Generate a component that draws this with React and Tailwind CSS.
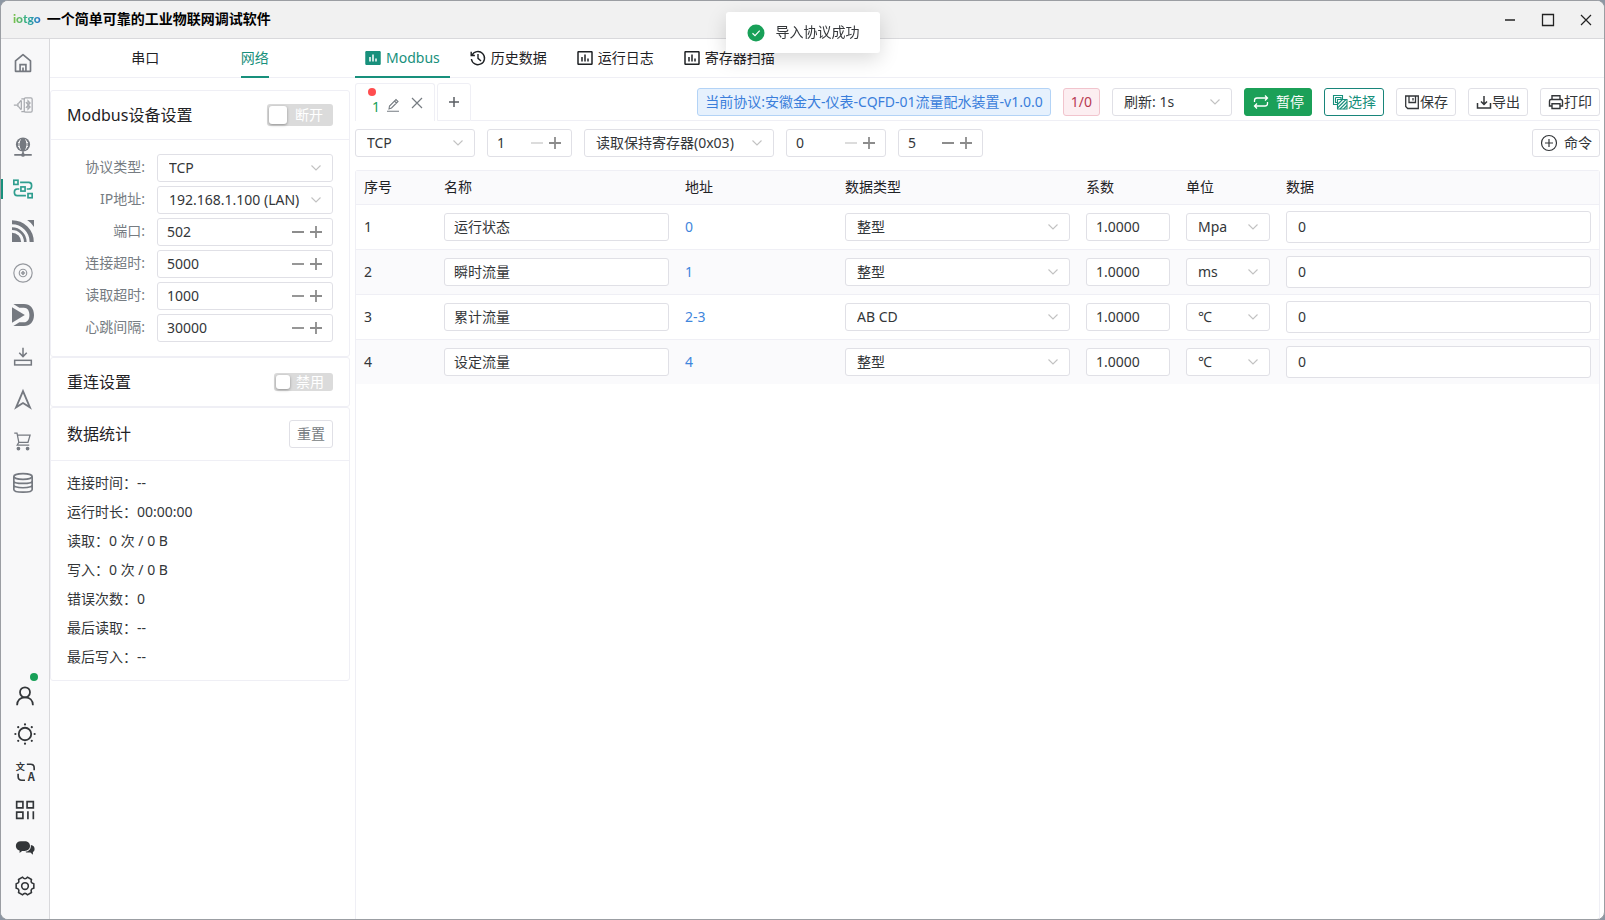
import React, { useState } from 'react';
import clsx from 'clsx';

const Svg = ({ size = 'size-5', className, children, box = 24, sw = 1.8 }) => (
    <svg
        viewBox={`0 0 ${box} ${box}`}
        className={clsx(size, 'shrink-0 overflow-visible', className)}
        fill="none"
        stroke="currentColor"
        strokeWidth={sw}
        aria-hidden="true"
    >
        {children}
    </svg>
);

const HomeIcon = () => (
    <Svg sw={2}>
        <path d="M3 22V9.500L12 2l9 7.500V22z" strokeLinejoin="round" />
        <path d="M8.500 22v-8h7v8M12 22v-4.500" />
    </Svg>
);

const PlugIcon = () => (
    <Svg className="opacity-60" sw={1.5}>
        <path d="M1 12h5M6 9.500v5M6 10c2.500 0 2-3.500 4-3.500M6 14c2.500 0 2 3.500 4 3.500M10 20h4M10 4.500h4M10 6.500v11" />
        <rect x="13.500" y="3.500" width="9.500" height="17" rx="1.500" />
        <path d="M15.500 8.500l5 6-2.500 2.500V7l2.500 2.500-5 6" />
    </Svg>
);

const GlobeIcon = () => (
    <Svg sw={1.6}>
        <circle cx="12" cy="9" r="8.500" fill="currentColor" stroke="none" />
        <path d="M12 17v4M1.500 21.500h21" strokeWidth="2" />
        <circle cx="12" cy="21.500" r="2.200" fill="currentColor" stroke="none" />
        <path d="M9 3c-2.500 4-2.500 8 0 12M15 3c2.500 4 2.500 8 0 12M6 6.500h2M6 11.500h2M16 6.500h2M16 11.500h2" stroke="#f8f8f9" strokeWidth="1.200" />
    </Svg>
);

const FlowIcon = () => (
    <Svg sw={2}>
        <rect x="1" y="1.500" width="5" height="5" />
        <rect x="9.500" y="9.500" width="5" height="5" />
        <rect x="18" y="17.500" width="5" height="5" />
        <path d="M8.500 4H19c4.500 0 4.500 8 0 8h-2.500M7.500 12H5c-4.500 0-4.500 8 0 8h10.500" />
    </Svg>
);

const SignalIcon = () => (
    <Svg size="size-[22px]">
        <path d="M0 14a10 10 0 0 1 10 10H0z" fill="currentColor" stroke="none" />
        <path d="M0 9.500A14.500 14.500 0 0 1 14.500 24" strokeWidth="3" />
        <path d="M0 2.500A21.500 21.500 0 0 1 21.500 24" strokeWidth="4.500" />
        <path d="M16.500 0H24v7.500A24 24 0 0 0 16.500 0z" fill="currentColor" stroke="none" />
    </Svg>
);

const TargetIcon = () => (
    <Svg className="opacity-75" sw={1.4}>
        <circle cx="12" cy="12" r="11" />
        <circle cx="12" cy="12" r="4.500" />
        <path d="M12 9.500v5M9.500 12h5" strokeWidth="2" />
    </Svg>
);

const PlayDIcon = () => (
    <Svg size="size-[22px]">
        <path
            d="M1.500 0H13c7 0 11 5 11 12s-4 12-11 12H1.500L8 20h5c4 0 6-3.500 6-8s-2-8-6-8H8z"
            fill="currentColor"
            stroke="none"
        />
        <path d="M0 3.500L14 12 0 20.500z" fill="currentColor" stroke="none" />
    </Svg>
);

const TrayIcon = () => (
    <Svg>
        <path d="M12 1v10M7.500 7l4.500 4.500L16.500 7" />
        <rect x="2" y="16" width="20" height="5.500" />
    </Svg>
);

const NavigateIcon = () => (
    <Svg sw={2.2}>
        <path d="M12 2.500l8.300 19.500L12 16.800 3.700 22z" />
    </Svg>
);

const CartIcon = () => (
    <Svg sw={1.5}>
        <path d="M1.500 2.500h3.300L7 13.500h11l2.500-8.500H5.500M7 13.500l-2 3.500h14.500" />
        <circle cx="6.500" cy="21" r="1.500" fill="currentColor" />
        <circle cx="17.500" cy="21" r="1.500" fill="currentColor" />
    </Svg>
);

const DatabaseIcon = () => (
    <Svg sw={2}>
        <ellipse cx="12" cy="4.200" rx="11" ry="3.400" />
        <path d="M1 4.200v15.500C1 24 23 24 23 19.700V4.200M1 9.500c0 4 22 4 22 0M1 14.500c0 4.200 22 4.200 22 0" />
    </Svg>
);

const UserIcon = () => (
    <Svg sw={2.1}>
        <circle cx="12" cy="7.500" r="6" />
        <path d="M2.500 23c0-6 4-9.500 9.500-9.500s9.500 3.500 9.500 9.500" />
    </Svg>
);

const SunIcon = () => (
    <Svg sw={2} size="size-[22px]">
        <circle cx="12" cy="12" r="6.800" />
        <path
            d="M12 1.500v.01M12 22.500v.01M1.500 12h.01M22.500 12h.01M4.600 4.600v.01M19.400 4.600v.01M4.600 19.400v.01M19.400 19.400v.01"
            strokeLinecap="round"
            strokeWidth="2.400"
        />
    </Svg>
);

const TranslateIcon = () => (
    <Svg sw={1.8} size="size-[22px]">
        <g fill="currentColor" stroke="none" fontFamily="'Noto Sans CJK SC', sans-serif" fontWeight="700">
            <text x="2" y="10" fontSize="10">文</text>
            <text x="15" y="22" fontSize="12">A</text>
        </g>
        <path d="M14 3.500h4c2.500 0 4 1.500 4 4V10M4.500 14v3c0 2.500 1.500 4 4 4H12" />
    </Svg>
);

const GridIcon = () => (
    <Svg sw={2}>
        <path d="M2 2h7.500v7.500H2zM14.500 2H22v7.500h-7.500zM2 14.500h7.500V22H2zM15.500 13.500V23M22 13.500V23" />
    </Svg>
);

const ChatIcon = () => (
    <Svg>
        <path
            d="M7 4h4.500c4 0 6.500 2 6.500 5.700 0 3.600-2.500 5.800-6.500 5.800H8.500L5.500 18v-3C3 14.500 1 12.500 1 9.700 1 6 3.500 4 7 4z"
            fill="currentColor"
            stroke="none"
        />
        <path d="M19 8.500c3 .5 4.500 2 4.500 4.700 0 2-.8 3-2 3.600V20L18.500 17.500H15c-1.200 0-2-.3-2.500-1 4-.2 7-3 6.500-8z" fill="currentColor" stroke="none" />
    </Svg>
);

const GearIcon = () => (
    <Svg sw={1.9}>
        <path
            d="M22.600 9.200v5.600Q18.100 15.500 19.800 19.800L14.900 22.600Q12 19 9.100 22.600L4.200 19.800Q5.900 15.500 1.400 14.800V9.200Q5.900 8.500 4.200 4.200L9.100 1.400Q12 5 14.900 1.400L19.800 4.200Q18.100 8.500 22.600 9.200z"
            strokeLinejoin="round"
        />
        <circle cx="12" cy="12" r="4" />
    </Svg>
);

const ChartIcon = ({ filled }) => (
    <Svg size="size-4" box={16} sw={1.5}>
        <rect x="1" y="1.700" width="14" height="12.600" rx=".5" fill={filled ? 'currentColor' : 'none'} />
        <path d="M5 7v4.500M8 4.500v7M11 8.500v3" stroke={filled ? '#fff' : 'currentColor'} />
    </Svg>
);

const HistoryIcon = () => (
    <Svg size="size-4" box={16} sw={1.4}>
        <path d="M2 5.200A6.600 6.600 0 1 1 1.400 9M1.200 1.800v3.700h3.700M8 4v4.400l3 2.600" />
    </Svg>
);

const Chevron = ({ className }) => (
    <svg
        viewBox="0 0 10 6"
        className={clsx('pointer-events-none absolute top-1/2 h-[6px] w-[10px] -translate-y-1/2', className)}
        fill="none"
        stroke="#c2c2c2"
        strokeWidth="1.1"
        aria-hidden="true"
    >
        <path d="M.5.5L5 5 9.500.5" />
    </svg>
);

const Select = ({ value, label, id, className }) => (
    <div className={clsx('relative h-7', className)}>
        <select
            id={id}
            aria-label={label}
            className="h-7 w-full appearance-none rounded-[3px] border border-[#e0e0e6] bg-white pr-6 pl-[11px] text-sm leading-5 text-[#333639] outline-none"
            defaultValue={value}
        >
            <option>{value}</option>
        </select>
        <Chevron className="right-3" />
    </div>
);

const NumberInput = ({ value, label, id, className, min = -1 }) => {
    const [num, setNum] = useState(value);
    return (
        <div className={clsx('flex h-7 items-center gap-[6px] rounded-[3px] border border-[#e0e0e6] bg-white pr-[10px] pl-[9px] text-[#8c8c8c]', className)}>
            <input
                id={id}
                aria-label={label}
                value={num}
                onChange={(e) => setNum(Number(e.target.value) || 0)}
                className="w-0 min-w-0 flex-1 bg-transparent text-sm leading-5 text-[#333639] outline-none"
            />
            <button
                type="button"
                aria-label="减少"
                disabled={num <= min}
                onClick={() => setNum(num - 1)}
                className="disabled:text-[#dcdcdc]"
            >
                <Svg size="size-3" box={12} sw={1.8}><path d="M0 6h12" /></Svg>
            </button>
            <button type="button" aria-label="增加" onClick={() => setNum(num + 1)}>
                <Svg size="size-3" box={12} sw={1.8}><path d="M0 6h12M6 0v12" /></Svg>
            </button>
        </div>
    );
};

const Switch = ({ label, text, large }) => (
    <label
        className={clsx(
            'relative flex cursor-pointer items-center justify-end rounded-[3px] bg-[#dbdbdb] text-sm leading-5 text-white',
            large ? 'h-[22px] w-[66px] pr-[10px]' : 'h-[18px] w-[59px] pr-[9px]'
        )}
    >
        <input type="checkbox" role="switch" aria-label={label} className="peer sr-only" />
        <span
            className={clsx(
                'absolute top-1/2 left-[2px] -translate-y-1/2 rounded-[3px] bg-white shadow-[0_1px_3px_rgba(0,0,0,0.35)]',
                large ? 'size-[18px]' : 'size-[14px]'
            )}
        />
        {text}
    </label>
);

const topNav = [
    ['首页', HomeIcon],
    ['串口设备', PlugIcon],
    ['网络', GlobeIcon],
    ['Modbus', FlowIcon],
    ['MQTT', SignalIcon],
    ['OPC', TargetIcon],
    ['DTU', PlayDIcon],
    ['下载', TrayIcon],
    ['导航', NavigateIcon],
    ['商城', CartIcon],
    ['数据库', DatabaseIcon],
];

const bottomNav = [
    ['用户', UserIcon],
    ['主题', SunIcon],
    ['语言', TranslateIcon],
    ['二维码', GridIcon],
    ['消息', ChatIcon],
    ['设置', GearIcon],
];

const numberFields = [
    ['port', '端口:', 502],
    ['connectTimeout', '连接超时:', 5000],
    ['readTimeout', '读取超时:', 1000],
    ['heartbeat', '心跳间隔:', 30000],
];

const stats = [
    ['连接时间', '--'],
    ['运行时长', '00:00:00'],
    ['读取', '0 次 / 0 B'],
    ['写入', '0 次 / 0 B'],
    ['错误次数', '0'],
    ['最后读取', '--'],
    ['最后写入', '--'],
];

const mainTabs = [
    ['Modbus', <ChartIcon filled />],
    ['历史数据', <HistoryIcon />],
    ['运行日志', <ChartIcon />],
    ['寄存器扫描', <ChartIcon />],
];

const registers = [
    { id: 1, name: '运行状态', address: '0', type: '整型', unit: 'Mpa' },
    { id: 2, name: '瞬时流量', address: '1', type: '整型', unit: 'ms' },
    { id: 3, name: '累计流量', address: '2-3', type: 'AB CD', unit: '℃' },
    { id: 4, name: '设定流量', address: '4', type: '整型', unit: '℃' },
];

const TitleBar = () => (
    <header className="flex h-[38px] items-center justify-between border-b border-[#d9d9dc] bg-[#f1f1f1] pr-[11px] pl-3">
        <div className="flex items-center gap-[6px] pb-[2px]">
            <span className="bg-linear-to-r from-[#7cc242] via-[#2fae8c] to-[#2f6fd0] bg-clip-text font-['Lato','Noto_Sans',sans-serif] text-xs leading-4 font-black text-transparent">
                iotgo
            </span>
            <h1 className="text-sm leading-5 font-bold text-black">一个简单可靠的工业物联网调试软件</h1>
        </div>
        <div className="flex items-center gap-6 text-[#222]">
            <button type="button" aria-label="最小化">
                <Svg size="size-[14px]" box={14} sw={1.5}><path d="M2 7h10" /></Svg>
            </button>
            <button type="button" aria-label="最大化">
                <Svg size="size-[14px]" box={14} sw={1.3}><path d="M1.500 1.500h11v11h-11z" /></Svg>
            </button>
            <button type="button" aria-label="关闭">
                <Svg size="size-[14px]" box={14} sw={1.2}><path d="M2 2l10 10M12 2L2 12" /></Svg>
            </button>
        </div>
    </header>
);

const Sidebar = () => (
    <nav className="flex w-[49px] shrink-0 flex-col justify-between border-r border-[#d9d9dc] bg-[#f8f8f9] pt-[3px] pb-[14px]">
        <ul className="text-[#757980]">
            {topNav.map(([name, Icon]) => (
                <li key={name} className="relative h-[42px]">
                    <button
                        type="button"
                        aria-label={name}
                        className={clsx('flex h-full w-11 items-center justify-center', name === 'Modbus' && 'text-[#2f9e8f]')}
                    >
                        <Icon />
                    </button>
                    {name === 'Modbus' && <span className="absolute top-[11px] left-0 h-5 w-[2px] bg-[#18907c]" />}
                </li>
            ))}
        </ul>
        <ul className="text-[#333639]">
            {bottomNav.map(([name, Icon]) => (
                <li key={name} className="relative h-[38px]">
                    <button type="button" aria-label={name} className="flex h-full w-12 items-center justify-center">
                        <Icon />
                    </button>
                    {name === '用户' && <span className="absolute -top-1 right-[11px] size-2 rounded-full bg-[#18a058]" />}
                </li>
            ))}
        </ul>
    </nav>
);

const SettingsPanel = () => (
    <aside className="w-[305px] shrink-0">
        <div className="flex h-[39px] justify-evenly border-b border-[#efeff5] pr-[5px]" role="tablist">
            <button type="button" role="tab" className="h-[39px] border-b-2 border-transparent text-sm leading-5 text-[#1f2225]">串口</button>
            <button type="button" role="tab" aria-selected="true" className="h-[39px] border-b-2 border-[#18907c] text-sm leading-5 text-[#18907c]">网络</button>
        </div>
        <div className="mt-3 mr-[5px]">
            <section className="rounded-[3px] border border-[#efeff5]">
                <div className="flex h-[49px] items-center justify-between border-b border-[#efeff5] px-4">
                    <h2 className="text-base leading-6 text-[#1f2225]">Modbus设备设置</h2>
                    <Switch large label="连接" text="断开" />
                </div>
                <div className="grid grid-cols-[78px_1fr] items-center gap-x-3 gap-y-1 px-4 py-[14px] text-sm leading-5 text-[#767c82]">
                    <label htmlFor="protocol" className="pb-[2px] text-right">协议类型:</label>
                    <Select id="protocol" value="TCP" />
                    <label htmlFor="ip" className="pb-[2px] text-right">IP地址:</label>
                    <Select id="ip" value="192.168.1.100 (LAN)" />
                    {numberFields.map(([id, label, value]) => (
                        <React.Fragment key={id}>
                            <label htmlFor={id} className="pb-[2px] text-right">{label}</label>
                            <NumberInput id={id} value={value} />
                        </React.Fragment>
                    ))}
                </div>
            </section>
            <section className="flex h-[50px] items-center justify-between rounded-[3px] border border-[#efeff5] px-4">
                <h2 className="text-base leading-6 text-[#1f2225]">重连设置</h2>
                <Switch label="重连" text="禁用" />
            </section>
            <section className="rounded-[3px] border border-[#efeff5]">
                <div className="flex h-[53px] items-center justify-between border-b border-[#efeff5] px-4">
                    <h2 className="text-base leading-6 text-[#1f2225]">数据统计</h2>
                    <button type="button" className="h-7 rounded-[3px] border border-[#e0e0e6] px-[7px] text-sm leading-5 text-[#767c82]">重置</button>
                </div>
                <ul className="px-4 pt-[7px] pb-[9px] text-sm leading-[29px] text-[#333639]">
                    {stats.map(([name, value]) => (
                        <li key={name}>{name}：{value}</li>
                    ))}
                </ul>
            </section>
        </div>
    </aside>
);

const ToolButton = ({ children, className = 'border-[#e0e0e6] bg-white text-[#333639]' }) => (
    <button type="button" className={clsx('flex h-7 shrink-0 items-center rounded-[3px] border px-[7px] text-sm leading-5', className)}>
        {children}
    </button>
);

const Toolbar = () => (
    <div className="flex">
        <div className="relative flex h-[38px] w-20 items-center rounded-t-[3px] border border-b-0 border-[#efeff5] pl-4">
            <span className="absolute top-1 left-3 size-2 rounded-full bg-[#ff4d4f]" />
            <span className="pt-2 text-sm leading-5 text-[#18a058]">1</span>
            <button type="button" aria-label="编辑" className="ml-[6px] pt-1 text-[#767c82]">
                <Svg size="size-[14px]" box={14} sw={1.1}>
                    <path d="M1 13.200h12M3 11l.5-3L10 1.500l2 2L5.500 10zM8.500 3l2 2" />
                </Svg>
            </button>
            <button type="button" aria-label="关闭标签" className="ml-[11px] text-[#767c82]">
                <Svg size="size-3" box={12} sw={1.2}><path d="M1 1l10 10M11 1L1 11" /></Svg>
            </button>
        </div>
        <button
            type="button"
            aria-label="新建标签"
            className="ml-[2px] flex w-[34px] items-center justify-center rounded-t-[3px] border border-[#efeff5] text-[#5a5e63]"
        >
            <Svg size="size-3" box={12} sw={1.5}><path d="M1 6h10M6 1v10" /></Svg>
        </button>
        <div className="flex flex-1 items-center justify-end gap-3 border-b border-[#efeff5]">
            <span className="flex h-7 shrink-0 items-center rounded-[3px] border border-[#b3d3f6] bg-[#e6f1fd] px-[7px] text-sm leading-5 text-[#3a7edb]">
                当前协议:安徽金大-仪表-CQFD-01流量配水装置-v1.0.0
            </span>
            <span className="flex h-7 shrink-0 items-center rounded-[3px] border border-[#f1c4cd] bg-[#fceef1] px-[7px] text-sm leading-5 text-[#b83a52]">
                1/0
            </span>
            <Select className="w-[120px]" label="刷新间隔" value="刷新: 1s" />
            <ToolButton className="border-[#1ba058] bg-[#1ba058] text-white">
                <Svg size="size-[18px]" box={18} sw={1.3}>
                    <path d="M2.500 9V7.500c0-1.700 1-2.500 2.500-2.500h10.500M13 2.500L15.500 5 13 7.500M15.500 9v1.500c0 1.700-1 2.500-2.500 2.500H2.500M5 10.500L2.500 13 5 15.500" />
                </Svg>
                <span className="ml-[6px]">暂停</span>
            </ToolButton>
            <ToolButton className="border-[#18857a] bg-white text-[#18907c]">
                <Svg size="size-4" box={16} sw={1.1}>
                    <path d="M5 10.500H1.500V1.500h9V5M5.500 5.500h9.500v9.500H5.500zM3.500 3.500V8.500H5M3.500 3.500H9V5" />
                    <path d="M5.500 10.500l5-5M5.500 14l8.500-8.500M8 15l7-7M11.500 15l3.500-3.500" />
                </Svg>
                选择
            </ToolButton>
            <ToolButton>
                <Svg size="size-4" box={16} sw={1.3}>
                    <path d="M1.700 2h12.600v12.500H3.700l-2-2zM5 2v6.500h6.500V2M9 4v2.500" />
                </Svg>
                保存
            </ToolButton>
            <ToolButton>
                <Svg size="size-4" box={16} sw={1.5}>
                    <path d="M1.500 9v5h13V9M8 2v8.500M5 7.500l3 3 3-3" />
                </Svg>
                导出
            </ToolButton>
            <ToolButton>
                <Svg size="size-4" box={16} sw={1.4}>
                    <path d="M4 5.500V1.700h8v3.800M4 12H1.500V7c0-1 .5-1.500 1.500-1.500h10c1 0 1.500.5 1.500 1.500v5H12M4 9.700h8v4.800H4z" />
                </Svg>
                打印
            </ToolButton>
        </div>
    </div>
);

const RegisterTable = () => (
    <div className="mt-[13px] flex-1 rounded-t-[3px] border border-b-0 border-[#efeff5]">
        <table className="w-full table-fixed border-separate border-spacing-0 text-left text-sm leading-5 text-[#333639]">
            <thead>
                <tr className="h-[34px] bg-[#fafafc] text-[#1f2225] *:border-b *:border-[#efeff5] *:px-2 *:pt-0 *:pb-[2px] *:font-normal">
                    <th className="w-20">序号</th>
                    <th className="w-[241px]">名称</th>
                    <th className="w-40">地址</th>
                    <th className="w-[241px]">数据类型</th>
                    <th className="w-[100px]">系数</th>
                    <th className="w-[100px]">单位</th>
                    <th>数据</th>
                </tr>
            </thead>
            <tbody>
                {registers.map((row) => (
                    <tr
                        key={row.id}
                        className="h-[45px] *:border-b *:border-[#efeff5] *:px-2 *:py-0 even:bg-[#fafafc] last:h-11 last:*:border-b-0"
                    >
                        <td>{row.id}</td>
                        <td>
                            <input
                                aria-label="名称"
                                defaultValue={row.name}
                                className="block h-7 w-full rounded-[3px] border border-[#e0e0e6] bg-white px-[9px] pb-[2px] outline-none"
                            />
                        </td>
                        <td className="text-[#3f86dc]">{row.address}</td>
                        <td><Select label="数据类型" value={row.type} /></td>
                        <td>
                            <input
                                aria-label="系数"
                                defaultValue="1.0000"
                                className="block h-7 w-full rounded-[3px] border border-[#e0e0e6] bg-white px-[9px] pb-[2px] outline-none"
                            />
                        </td>
                        <td><Select label="单位" value={row.unit} /></td>
                        <td>
                            <input
                                aria-label="数据"
                                defaultValue="0"
                                className="block h-8 w-full rounded-[3px] border border-[#e0e0e6] bg-white px-[11px] pb-[2px] outline-none"
                            />
                        </td>
                    </tr>
                ))}
            </tbody>
        </table>
    </div>
);

const App = () => {
    return (
        <div className="flex min-h-screen flex-col bg-[#8d97a3] font-['Noto_Sans','Noto_Sans_CJK_SC',sans-serif]">
            <div className="flex flex-1 flex-col overflow-hidden rounded-lg border border-[#9b9ea3] bg-white">
                <TitleBar />
                <div className="flex flex-1">
                    <Sidebar />
                    <SettingsPanel />
                    <main className="flex min-w-0 flex-1 flex-col pr-1">
                        <div className="-mr-1 flex h-[39px] gap-[10px] border-b border-[#efeff5]" role="tablist">
                            {mainTabs.map(([name, icon]) => (
                                <button
                                    key={name}
                                    type="button"
                                    role="tab"
                                    aria-selected={name === 'Modbus'}
                                    className={clsx(
                                        'flex h-[39px] items-center gap-[5px] border-b-2 px-[10px] text-sm leading-5',
                                        name === 'Modbus' ? 'border-[#18907c] text-[#18907c]' : 'border-transparent text-[#1f2225]'
                                    )}
                                >
                                    {icon}
                                    {name}
                                </button>
                            ))}
                        </div>
                        <div className="mt-[5px]">
                            <Toolbar />
                        </div>
                        <div className="mt-2 flex items-center gap-3">
                            <Select className="w-[120px]" label="协议" value="TCP" />
                            <NumberInput className="w-[85px]" label="从站地址" value={1} min={1} />
                            <Select className="w-[190px]" label="功能码" value="读取保持寄存器(0x03)" />
                            <NumberInput className="w-[100px]" label="起始地址" value={0} min={0} />
                            <NumberInput className="w-[85px]" label="数量" value={5} min={1} />
                            <div className="ml-auto">
                                <ToolButton>
                                    <Svg size="size-[18px]" box={18} sw={1.2}>
                                        <circle cx="9" cy="9" r="7.500" />
                                        <path d="M5 9h8M9 5v8" />
                                    </Svg>
                                    <span className="ml-[6px]">命令</span>
                                </ToolButton>
                            </div>
                        </div>
                        <RegisterTable />
                    </main>
                </div>
            </div>
            <div
                role="status"
                className="fixed top-3 left-1/2 z-10 flex h-[41px] -translate-x-1/2 items-center gap-[10px] rounded-[3px] bg-white px-5 text-sm leading-5 text-[#333639] shadow-[0_6px_20px_rgba(0,0,0,0.15)]"
            >
                <Svg size="size-5" box={20} sw={1.2}>
                    <circle cx="10" cy="10" r="8.500" fill="#18a058" stroke="none" />
                    <path d="M6.500 10.200l2.500 2.400 4.700-5" stroke="#fff" />
                </Svg>
                <span className="pb-[2px]">导入协议成功</span>
            </div>
        </div>
    );
};

export default App;
